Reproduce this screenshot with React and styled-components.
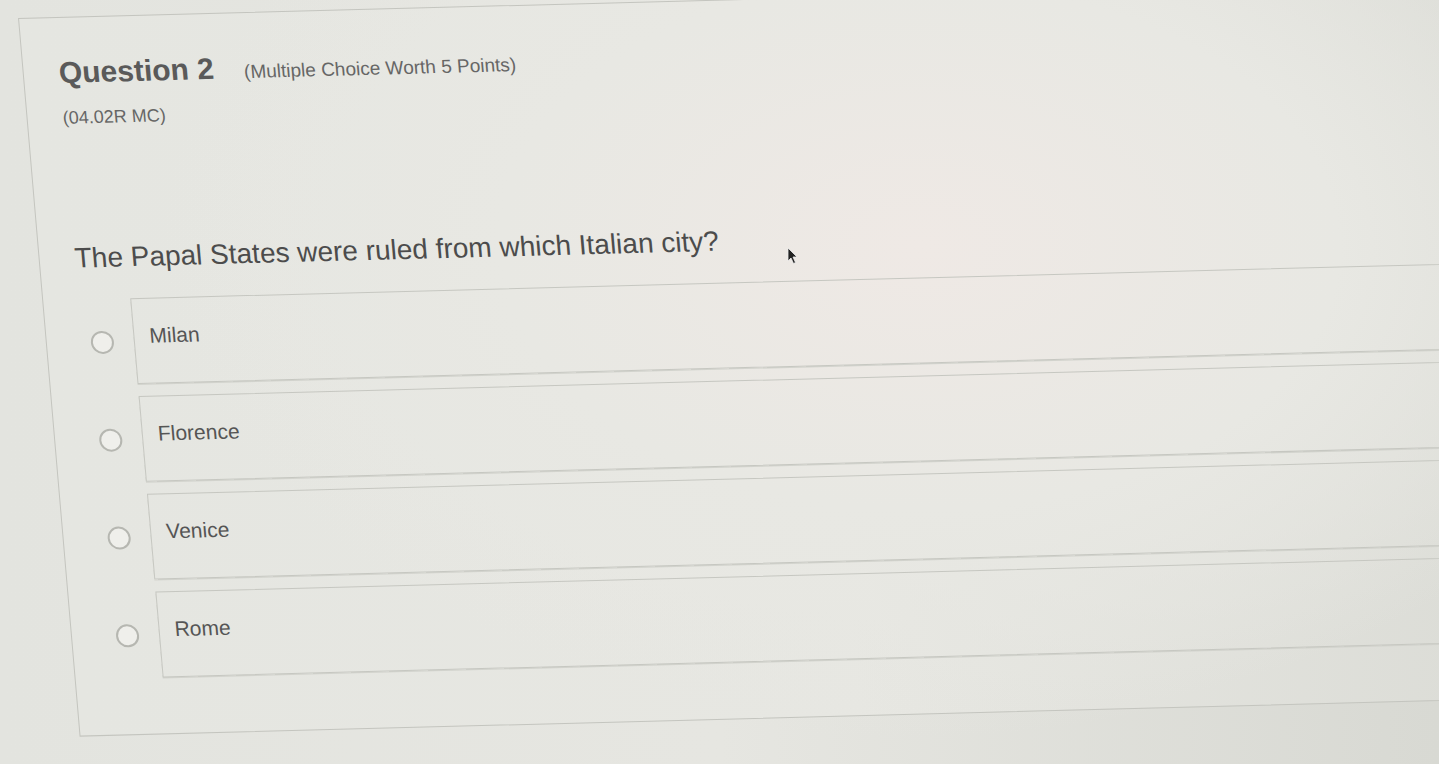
import React from "react";
import styled, { createGlobalStyle } from "styled-components";

const Global = createGlobalStyle`
  html, body {
    margin: 0;
    height: 100%;
    overflow: hidden;
    background: #e0e1dc;
    font-family: "Liberation Sans", Arial, Helvetica, sans-serif;
  }
`;

const Page = styled.div`
  position: relative;
  height: 100vh;
  box-sizing: border-box;
  padding: 18px 0 0 18px;
  background:
    radial-gradient(ellipse 760px 480px at 900px 260px, #efe8e4 0%, #e7e7e2 55%, transparent 100%),
    linear-gradient(90deg, #e3e4df 0%, #e6e6e1 50%, #d8d9d3 100%);
`;

const Card = styled.section`
  width: 1560px;
  height: 720px;
  box-sizing: border-box;
  padding: 38px 0 0 35px;
  border: 1px solid #c4c5bf;
  background:
    radial-gradient(ellipse 760px 480px at 880px 250px, #efe9e5 0%, #e8e8e3 55%, transparent 100%),
    linear-gradient(90deg, #e5e6e1 0%, #e7e7e2 50%, #d9dad4 100%);
  transform-origin: 0 0;
  transform: rotate(-1.5deg) skewX(3.4deg);
`;

const Header = styled.div`
  display: flex;
  align-items: baseline;
  gap: 30px;
`;

const Title = styled.h2`
  margin: 0;
  font-size: 30px;
  line-height: 34px;
  font-weight: 700;
  color: #5a5a5a;
`;

const Meta = styled.span`
  font-size: 19px;
  color: #666;
`;

const Code = styled.div`
  margin-top: 17px;
  font-size: 18px;
  line-height: 22px;
  color: #666;
`;

const Prompt = styled.p`
  margin: 113px 0 0;
  font-size: 28px;
  line-height: 34px;
  color: #4c4c4c;
`;

const Options = styled.div`
  margin-top: 24px;
  display: flex;
  flex-direction: column;
  gap: 12px;
`;

const Row = styled.label`
  display: flex;
  align-items: center;
  padding-left: 9px;
  gap: 20px;
`;

const Radio = styled.span`
  flex: none;
  width: 19px;
  height: 19px;
  border-radius: 50%;
  border: 2px solid #b6b7b1;
  background: #efefeb;
`;

const Box = styled.div`
  flex: 1;
  height: 86px;
  box-sizing: border-box;
  display: flex;
  align-items: center;
  padding: 0 0 10px 15px;
  border: 1px solid #c6c7c1;
  box-shadow: 0 1px 0 #d2d3cd;
  font-size: 21px;
  color: #555;
`;

const Cursor = styled.svg`
  position: absolute;
  left: 787px;
  top: 247px;
`;

const choices = ["Milan", "Florence", "Venice", "Rome"];

export default function App() {
  return (
    <>
      <Global />
      <Page>
        <Card>
          <Header>
            <Title>Question 2</Title>
            <Meta>(Multiple Choice Worth 5 Points)</Meta>
          </Header>
          <Code>(04.02R MC)</Code>
          <Prompt>The Papal States were ruled from which Italian city?</Prompt>
          <Options>
            {choices.map((c) => (
              <Row key={c}>
                <Radio />
                <Box>{c}</Box>
              </Row>
            ))}
          </Options>
        </Card>
        <Cursor width="12" height="18" viewBox="0 0 12 18">
          <path d="M1 1 L1 14 L4 11 L6.5 16.5 L8.5 15.5 L6 10 L10 10 Z" fill="#222" stroke="#eee" strokeWidth="0.8" />
        </Cursor>
      </Page>
    </>
  );
}
